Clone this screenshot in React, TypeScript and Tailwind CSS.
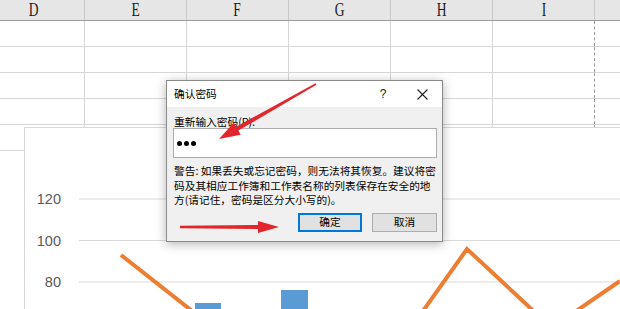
import React from 'react';

const COLS = ['D', 'E', 'F', 'G', 'H', 'I', ''];
const ROWS = [0, 1, 2, 3, 4];

type Pt = [number, number];

// tapered red arrow, thin at the tail, fat just before the head
const arrowPoints = (tail: Pt, tip: Pt, tailW: number, neckW: number, headL: number, headW: number) => {
  const dx = tip[0] - tail[0];
  const dy = tip[1] - tail[1];
  const len = Math.hypot(dx, dy);
  const ux = dx / len;
  const uy = dy / len;
  const nx = -uy;
  const ny = ux;
  const neck: Pt = [tip[0] - ux * headL, tip[1] - uy * headL];
  const p = (b: Pt, w: number): string => `${b[0] + nx * w / 2},${b[1] + ny * w / 2}`;
  return [
    p(tail, tailW),
    p(neck, neckW),
    p(neck, headW),
    `${tip[0]},${tip[1]}`,
    p(neck, -headW),
    p(neck, -neckW),
    p(tail, -tailW),
  ].join(' ');
};

const Sheet: React.FC = () => (
  <div className="-ml-[17px]">
    <div className="flex border-b border-[#9b9b9b] bg-[#e6e6e6]">
      {COLS.map((c, i) => (
        <div
          key={i}
          className="w-[102px] h-[20px] shrink-0 border-r border-[#c8c8c8] flex items-center justify-center font-['Liberation_Serif',serif] text-[18px] leading-none text-[#1a1a1a]"
        >
          <span className="inline-block scale-x-75">{c}</span>
        </div>
      ))}
    </div>
    {ROWS.map((r) => (
      <div key={r} className="flex h-[26px] border-b border-[#d6d6d6]">
        {COLS.map((c, i) => (
          <div
            key={i}
            className={`w-[102px] shrink-0 border-r ${i === 5 ? 'border-dashed border-[#9a9a9a]' : 'border-[#d6d6d6]'}`}
          />
        ))}
      </div>
    ))}
  </div>
);

const Chart: React.FC = () => (
  <div className="absolute left-[24px] top-[127px] right-0 bottom-0 bg-white border-l border-t border-[#d9d9d9]">
    <svg width="595" height="181" viewBox="25 128 595 181" className="block">
      {[199, 240.5, 282].map((y) => (
        <line key={y} x1="79" x2="620" y1={y} y2={y} stroke="#d9d9d9" strokeWidth="1" />
      ))}
      <g fontFamily="'Liberation Sans', sans-serif" fontSize="14.5" fill="#595959" textAnchor="end">
        <text x="61" y="204">120</text>
        <text x="61" y="245.5">100</text>
        <text x="61" y="287">80</text>
      </g>
      <rect x="195" y="303" width="26" height="20" fill="#5b9bd5" />
      <rect x="281" y="290" width="27" height="30" fill="#5b9bd5" />
      <polyline
        points="121,255 201,318 418,318 467,249 541,318 566,318 620,281"
        fill="none"
        stroke="#ed7d31"
        strokeWidth="4"
        strokeLinejoin="miter"
      />
    </svg>
  </div>
);

const Dialog: React.FC = () => (
  <div className="absolute left-[166px] top-[80px] w-[277px] h-[162px] border border-[#8a8a8a] bg-[#f0f0f0] shadow-[0_2px_10px_rgba(0,0,0,0.3)] font-['Noto_Sans_CJK_SC',sans-serif] text-[10.7px] text-black">
    <div className="flex h-[26px] items-center bg-white pl-[7px]">
      <span className="flex-1 leading-none">确认密码</span>
      <span className="w-[40px] text-center font-['Liberation_Sans',sans-serif] text-[12px] text-[#222]">?</span>
      <span className="w-[39px] flex justify-center">
        <svg width="11" height="11" viewBox="0 0 11 11">
          <path d="M0.5 0.5 L10.5 10.5 M10.5 0.5 L0.5 10.5" stroke="#222" strokeWidth="1.1" />
        </svg>
      </span>
    </div>
    <div className="pt-[9px] pl-[6px] pr-[5px]">
      <div className="ml-[1px] leading-[12px]">重新输入密码(P):</div>
      <div className="h-[30px] bg-white border border-[#acacac] flex items-center gap-[2px] pl-[3px]">
        <span className="w-[5px] h-[5px] rounded-full bg-black" />
        <span className="w-[5px] h-[5px] rounded-full bg-black" />
        <span className="w-[5px] h-[5px] rounded-full bg-black" />
      </div>
      <p className="mt-[6px] ml-[1px] leading-[14.5px] whitespace-nowrap">
        警告: 如果丢失或忘记密码，则无法将其恢复。建议将密
        <br />
        码及其相应工作簿和工作表名称的列表保存在安全的地
        <br />
        方(请记住，密码是区分大小写的)。
      </p>
      <div className="mt-[5px] flex justify-end gap-[10px]">
        <button className="w-[64px] h-[19px] bg-[#e1e1e1] border-2 border-[#0078d7] leading-none">确定</button>
        <button className="w-[65px] h-[19px] bg-[#e1e1e1] border border-[#adadad] leading-none">取消</button>
      </div>
    </div>
  </div>
);

const Arrows: React.FC = () => (
  <svg className="absolute inset-0 pointer-events-none" width="620" height="309" viewBox="0 0 620 309">
    <polygon points={arrowPoints([316, 84], [219, 139], 2, 4.5, 21, 14)} fill="#e3262b" />
    <polygon points={arrowPoints([180, 227], [279, 227], 2.5, 4, 21, 12)} fill="#e3262b" />
  </svg>
);

export default function App() {
  return (
    <div className="relative w-[620px] h-[309px] overflow-hidden bg-white">
      <Sheet />
      <Chart />
      <Dialog />
      <Arrows />
    </div>
  );
}
